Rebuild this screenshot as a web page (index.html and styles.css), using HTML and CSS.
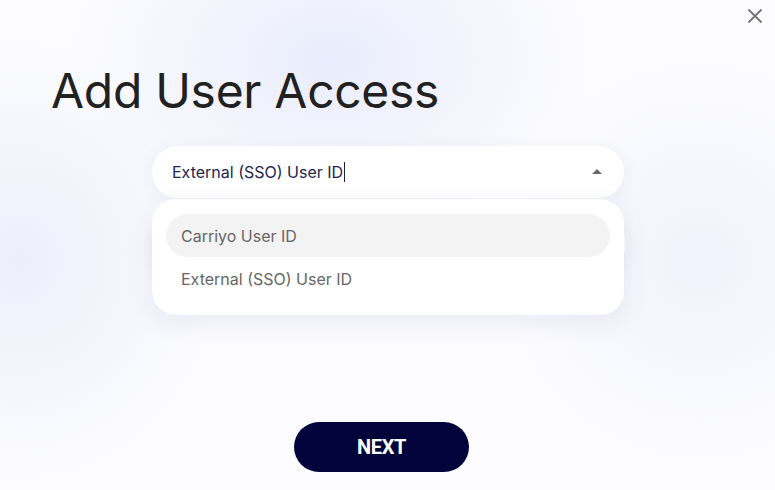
FILE: index.html
```html
<!DOCTYPE html>
<html lang="en">
<head>
<meta charset="utf-8">
<title>Add User Access</title>
<link rel="stylesheet" href="styles.css">
</head>
<body>
<div class="modal">
  <div class="topbar">
    <button class="close" aria-label="Close">
      <svg width="16" height="16" viewBox="0 0 16 16"><path d="M1.5 1.5 L14.5 14.5 M14.5 1.5 L1.5 14.5" stroke="#737373" stroke-width="1.8" fill="none"/></svg>
    </button>
  </div>
  <h1 class="title">Add User Access</h1>
  <div class="fields">
    <div class="select-wrap">
      <div class="select">
        <span class="value">External (SSO) User ID</span><span class="caret"></span>
        <span class="arrow"></span>
      </div>
      <ul class="menu">
        <li class="option active">Carriyo User ID</li>
        <li class="option">External (SSO) User ID</li>
      </ul>
    </div>
    <div class="field-under"></div>
  </div>
  <div class="actions">
    <button class="next">NEXT</button>
  </div>
</div>
</body>
</html>
```
FILE: styles.css
```css
* { box-sizing: border-box; }
html, body { margin: 0; padding: 0; }
body {
  width: 775px;
  height: 490px;
  overflow: hidden;
  font-family: Inter, "Noto Sans", sans-serif;
  background:
    radial-gradient(ellipse 260px 180px at 330px 60px, rgba(232,235,252,0.95), rgba(232,235,252,0) 100%),
    radial-gradient(ellipse 200px 220px at 20px 260px, rgba(234,237,251,0.9), rgba(234,237,251,0) 100%),
    radial-gradient(ellipse 200px 200px at 700px 260px, rgba(238,240,252,0.8), rgba(238,240,252,0) 100%),
    #fcfcfe;
}
.modal {
  width: 775px;
  height: 490px;
  display: flex;
  flex-direction: column;
}
.topbar {
  height: 32px;
  display: flex;
  justify-content: flex-end;
  padding: 8px 12px 0 0;
}
.close {
  width: 16px;
  height: 16px;
  padding: 0;
  border: 0;
  background: none;
  display: block;
}
.close svg { display: block; }
.title {
  margin: 30px 0 0 51px;
  font-family: Inter, sans-serif;
  font-weight: 400;
  font-size: 48px;
  line-height: 58px;
  color: #212121;
  letter-spacing: -0.3px;
}
.fields {
  margin: 26px 0 0 152px;
  width: 472px;
  display: flex;
  flex-direction: column;
  gap: 20px;
}
.select-wrap { position: relative; z-index: 2; }
.select {
  height: 52px;
  border-radius: 26px;
  background: #ffffff;
  box-shadow: 0 4px 18px rgba(60,70,140,0.07);
  display: flex;
  align-items: center;
  padding: 0 22px 0 20px;
  font-size: 16px;
  color: #24264f;
}
.value { line-height: 20px; }
.caret {
  width: 1px;
  height: 20px;
  background: #1d1f4a;
  margin-left: 1px;
}
.arrow {
  margin-left: auto;
  width: 0;
  height: 0;
  border-left: 5px solid transparent;
  border-right: 5px solid transparent;
  border-bottom: 5px solid #6a6a6a;
  margin-top: -2px;
}
.menu {
  position: absolute;
  top: 53px;
  left: 0;
  width: 472px;
  margin: 0;
  padding: 15px 14px;
  list-style: none;
  background: #ffffff;
  border-radius: 24px;
  box-shadow: 0 8px 26px rgba(60,70,140,0.09);
}
.option {
  height: 43px;
  border-radius: 22px;
  display: flex;
  align-items: center;
  padding-left: 15px;
  font-size: 16px;
  color: #666666;
}
.option.active { background: #f3f3f3; }
.field-under {
  height: 52px;
  width: 474px;
  border-radius: 26px;
  background: #fdfdfd;
  box-shadow: 0 4px 18px rgba(60,70,140,0.06);
}
.actions {
  margin: 152px 0 0 294px;
}
.next {
  width: 175px;
  height: 50px;
  border: 0;
  border-radius: 25px;
  background: #02033b;
  color: #ffffff;
  font-family: Roboto, "Liberation Sans", sans-serif;
  font-weight: 700;
  font-size: 20px;
  letter-spacing: -0.3px;
  padding: 0;
}
```
